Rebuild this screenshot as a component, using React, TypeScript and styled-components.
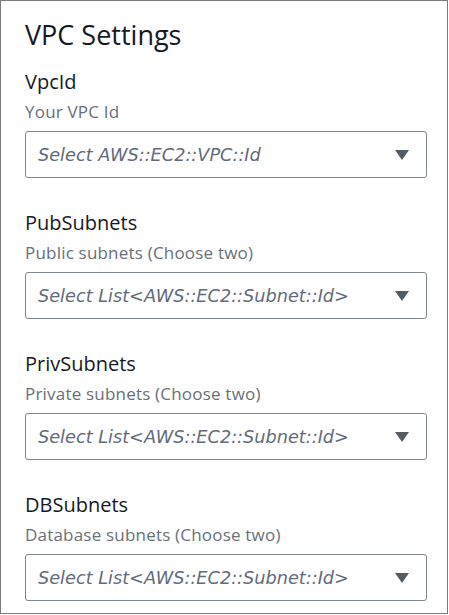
import styled, { createGlobalStyle } from 'styled-components'

const GlobalStyle = createGlobalStyle`
   html, body {
      margin: 0;
      padding: 0;
      background: #ffffff;
   }
   body {
      font-family: 'Open Sans', 'Noto Sans', sans-serif;
   }
`

const Panel = styled.div`
   box-sizing: border-box;
   width: 448px;
   height: 614px;
   border: 1px solid #7b7b7b;
   padding: 18px 20px 0 24px;
   display: flex;
   flex-direction: column;
`

const Title = styled.h2`
   margin: 0 0 19px;
   font-size: 27px;
   line-height: 32px;
   font-weight: 400;
   color: #16191f;
`

const Field = styled.div`
   display: flex;
   flex-direction: column;
   margin-bottom: 33px;
`

const Label = styled.div`
   font-size: 20px;
   line-height: 24px;
   color: #16191f;
   margin-bottom: 6px;
`

const Description = styled.div`
   font-size: 17px;
   line-height: 24px;
   letter-spacing: 0.2px;
   color: #687078;
   margin-bottom: 7px;
`

const SelectBox = styled.div`
   box-sizing: border-box;
   height: 47px;
   border: 1px solid #7f868c;
   border-radius: 3px;
   display: flex;
   align-items: center;
   justify-content: space-between;
   padding: 0 16px 0 12px;
`

const Placeholder = styled.span`
   font-family: 'DejaVu Sans', 'Open Sans', sans-serif;
   font-size: 17.7px;
   font-style: italic;
   color: #5f6b7a;
`

const Caret = () => (
   <svg width='16' height='12' viewBox='0 0 16 12'>
      <path d='M1 1 H15 L8 11 Z' fill='#545b64' />
   </svg>
)

const fields = [
   { name: 'VpcId', desc: 'Your VPC Id', placeholder: 'Select AWS::EC2::VPC::Id' },
   { name: 'PubSubnets', desc: 'Public subnets (Choose two)', placeholder: 'Select List<AWS::EC2::Subnet::Id>' },
   { name: 'PrivSubnets', desc: 'Private subnets (Choose two)', placeholder: 'Select List<AWS::EC2::Subnet::Id>' },
   { name: 'DBSubnets', desc: 'Database subnets (Choose two)', placeholder: 'Select List<AWS::EC2::Subnet::Id>' },
]

export default function App() {
   return (
      <>
         <GlobalStyle />
         <Panel>
            <Title>VPC Settings</Title>
            {fields.map((f) => (
               <Field key={f.name}>
                  <Label>{f.name}</Label>
                  <Description>{f.desc}</Description>
                  <SelectBox>
                     <Placeholder>{f.placeholder}</Placeholder>
                     <Caret />
                  </SelectBox>
               </Field>
            ))}
         </Panel>
      </>
   )
}
